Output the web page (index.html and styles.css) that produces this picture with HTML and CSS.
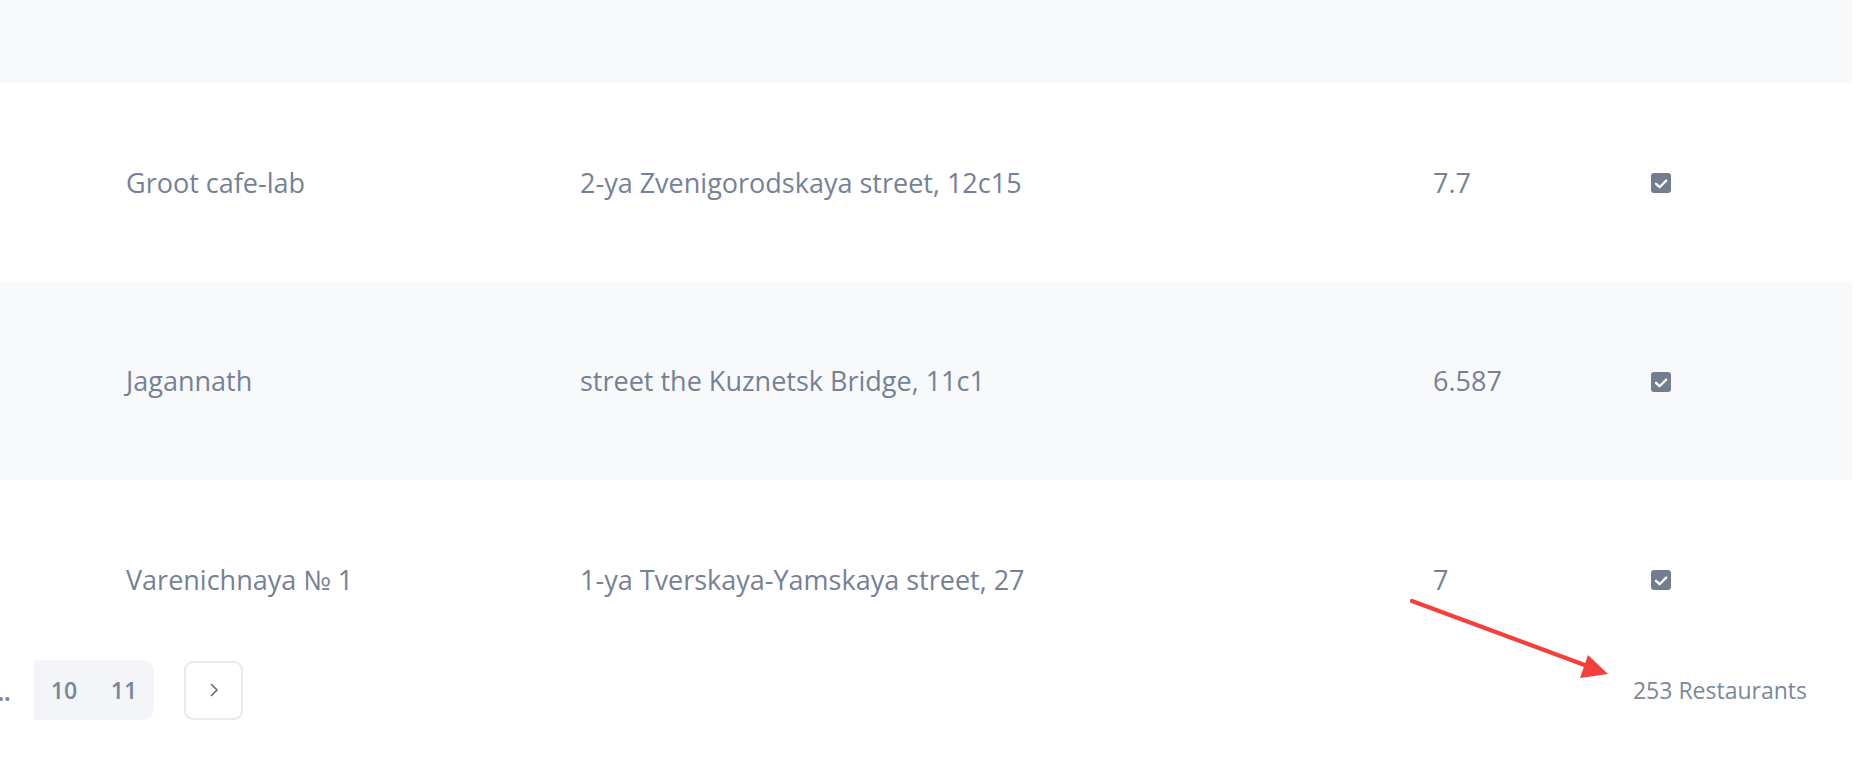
FILE: index.html
```html
<!DOCTYPE html>
<html>
<head>
<meta charset="utf-8">
<link rel="stylesheet" href="styles.css">
</head>
<body>
<div class="page">
  <div class="table">
    <div class="thead"></div>
    <div class="row">
      <div class="cell name">Groot cafe-lab</div>
      <div class="cell addr">2-ya Zvenigorodskaya street, 12c15</div>
      <div class="cell score">7.7</div>
      <div class="cell check"><span class="box"><svg width="20" height="20" viewBox="0 0 20 20"><path d="M5 10.8 L8.6 14.2 L15.2 7.6" fill="none" stroke="#fff" stroke-width="2.3" stroke-linecap="round" stroke-linejoin="round"/></svg></span></div>
    </div>
    <div class="row alt">
      <div class="cell name">Jagannath</div>
      <div class="cell addr">street the Kuznetsk Bridge, 11c1</div>
      <div class="cell score">6.587</div>
      <div class="cell check"><span class="box"><svg width="20" height="20" viewBox="0 0 20 20"><path d="M5 10.8 L8.6 14.2 L15.2 7.6" fill="none" stroke="#fff" stroke-width="2.3" stroke-linecap="round" stroke-linejoin="round"/></svg></span></div>
    </div>
    <div class="row">
      <div class="cell name">Varenichnaya № 1</div>
      <div class="cell addr">1-ya Tverskaya-Yamskaya street, 27</div>
      <div class="cell score">7</div>
      <div class="cell check"><span class="box"><svg width="20" height="20" viewBox="0 0 20 20"><path d="M5 10.8 L8.6 14.2 L15.2 7.6" fill="none" stroke="#fff" stroke-width="2.3" stroke-linecap="round" stroke-linejoin="round"/></svg></span></div>
    </div>
  </div>
  <div class="footer">
    <div class="pager">
      <span class="dots">...</span>
      <div class="pages">
        <span class="pg">10</span>
        <span class="pg">11</span>
      </div>
      <button class="next"><svg width="9" height="14" viewBox="0 0 9 14"><path d="M1.5 1.5 L7 7 L1.5 12.5" fill="none" stroke="#5f6b7c" stroke-width="1.6" stroke-linecap="round" stroke-linejoin="round"/></svg></button>
    </div>
    <div class="count">253 Restaurants</div>
  </div>
  <svg class="arrow" width="1864" height="760" viewBox="0 0 1864 760">
    <line x1="1412" y1="601" x2="1590" y2="667" stroke="#f43f3a" stroke-width="4.2" stroke-linecap="round"/>
    <polygon points="1588,655 1580,678 1608,674" fill="#f43f3a"/>
  </svg>
</div>
</body>
</html>
```
FILE: styles.css
```css
* { box-sizing: border-box; }
html, body { margin: 0; padding: 0; background: #fff; }
body { font-family: "Open Sans", "Noto Sans", sans-serif; color: #758196; }
.page { position: relative; width: 1864px; height: 760px; overflow: hidden; }
.table { width: 1852px; height: 650px; overflow: hidden; }
.thead { height: 83px; background: #f8f9fb; }
.row { height: 198.5px; display: flex; align-items: center; padding-left: 126px; font-size: 27px; }
.row.alt { background: #f8f9fb; }
.cell.name { width: 454px; }
.cell.addr { width: 853px; }
.cell.score { width: 218px; }
.cell.check { display: flex; align-items: center; padding-top: 2px; }
.box { width: 20px; height: 20px; border-radius: 3px; background: #727d8f; display: block; }
.box svg { display: block; }
.footer { margin-top: 10px; height: 60px; display: flex; align-items: center; justify-content: space-between; padding-right: 57px; }
.pager { display: flex; align-items: center; }
.dots { margin-left: -9px; width: 43px; font-size: 23px; font-weight: 700; color: #7a879b; line-height: 60px; padding-top: 4px; }
.pages { display: flex; background: #f3f5f9; border-radius: 0 12px 12px 0; height: 60px; }
.pg { width: 60px; height: 60px; display: flex; align-items: center; justify-content: center; font-size: 23px; font-weight: 600; color: #7a879b; }
.next { margin-left: 30px; width: 59px; height: 59px; border: 2px solid #e6e9ef; border-radius: 9px; background: #fff; display: flex; align-items: center; justify-content: center; padding: 0; padding-left: 2px; }
.count { font-size: 23px; color: #7a879b; }
.arrow { position: absolute; left: 0; top: 0; pointer-events: none; }
```
